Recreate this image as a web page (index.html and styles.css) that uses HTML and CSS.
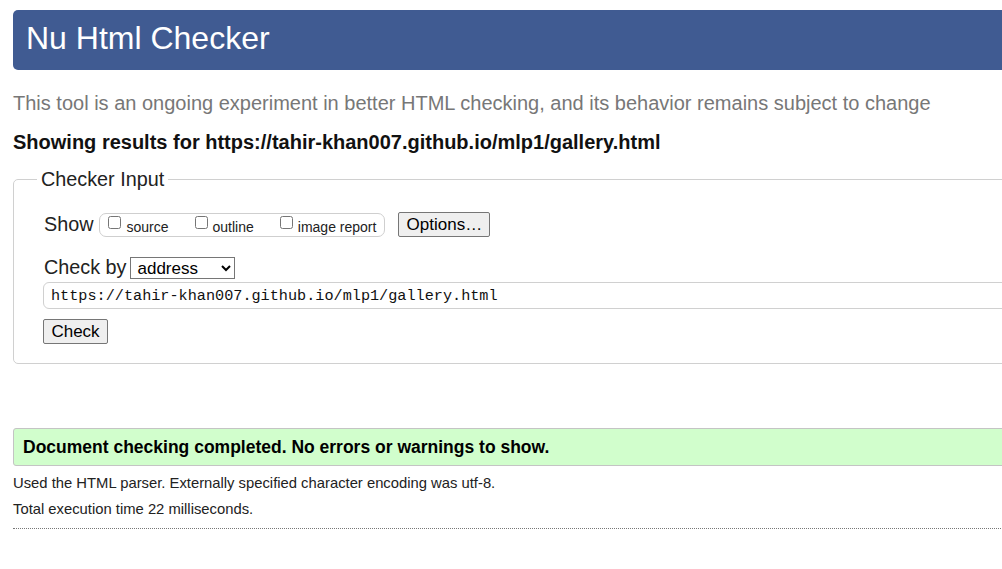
FILE: index.html
```html
<!DOCTYPE html>
<html lang="en">
<head>
<meta charset="utf-8">
<title>Showing results for https://tahir-khan007.github.io/mlp1/gallery.html - Nu Html Checker</title>
<link rel="stylesheet" href="styles.css">
</head>
<body>
<div class="page">
  <h1 class="masthead">Nu Html Checker</h1>
  <p class="tagline">This tool is an ongoing experiment in better HTML checking, and its behavior remains subject to change</p>
  <p class="results-for">Showing results for https://tahir-khan007.github.io/mlp1/gallery.html</p>
  <form class="checker-form">
    <fieldset class="checker">
      <legend class="checker-legend">Checker Input</legend>
      <div class="show-row">
        <span class="row-label">Show</span>
        <span class="show-opts">
          <label class="opt"><input type="checkbox" class="cb"><span>source</span></label>
          <label class="opt"><input type="checkbox" class="cb"><span>outline</span></label>
          <label class="opt"><input type="checkbox" class="cb"><span>image report</span></label>
        </span>
        <button type="button" class="btn options-btn">Options…</button>
      </div>
      <div class="checkby-row">
        <span class="row-label">Check by</span>
        <select class="checkby-select"><option>address</option><option>file upload</option><option>text input</option></select>
      </div>
      <input class="url-input" type="url" value="https://tahir-khan007.github.io/mlp1/gallery.html">
      <div class="submit-row"><button type="button" class="btn check-btn">Check</button></div>
    </fieldset>
  </form>
  <p class="success">Document checking completed. No errors or warnings to show.</p>
  <p class="details">Used the HTML parser. Externally specified character encoding was utf-8.</p>
  <p class="details">Total execution time 22 milliseconds.</p>
  <hr class="rule">
</div>
</body>
</html>
```
FILE: styles.css
```css
html {
  overflow: hidden;
  background: #ffffff;
}
body {
  margin: 0;
  font-family: "Liberation Sans", Arial, sans-serif;
  color: #111;
}
.page {
  width: 1200px;
  padding: 10px 0 0 13px;
}
.masthead {
  margin: 0;
  height: 60px;
  box-sizing: border-box;
  padding-left: 13px;
  line-height: 57px;
  font-size: 32px;
  font-weight: normal;
  color: #ffffff;
  background: #405b92;
  border-radius: 5px 0 0 5px;
}
.tagline {
  margin: 21px 0 0;
  font-size: 20px;
  line-height: 24px;
  color: #777;
}
.results-for {
  margin: 15px 0 0;
  font-size: 20px;
  line-height: 24px;
  font-weight: bold;
  color: #111;
}
.checker-form {
  margin: 14px 0 0;
}
.checker {
  margin: 0;
  border: 1px solid #d0d0d0;
  border-radius: 5px;
  padding: 20px 0 19px 29px;
  min-width: 0;
}
.checker-legend {
  margin-left: -6px;
  padding: 0 4px 0 4px;
  font-size: 19.8px;
  line-height: 23px;
  color: #222;
}
.show-row {
  display: flex;
  align-items: center;
  height: 27px;
  margin-left: 1px;
}
.row-label {
  font-size: 19.8px;
  color: #222;
}
.show-opts {
  display: flex;
  align-items: center;
  gap: 26px;
  height: 22px;
  margin-left: 6px;
  padding: 0 8px 0 8px;
  border: 1px solid #cfcfcf;
  border-radius: 7px;
}
.opt {
  display: flex;
  align-items: center;
  gap: 5px;
  font-size: 14px;
  color: #222;
}
.opt span {
  position: relative;
  top: 2px;
}
.cb {
  margin: 0;
  width: 13px;
  height: 13px;
  position: relative;
  top: -2px;
}
.btn {
  font-family: "Liberation Sans", Arial, sans-serif;
  font-size: 17px;
  color: #000;
  background: #efefef;
  border: 1px solid #767676;
  border-radius: 2px;
  padding: 0 7px;
  height: 25px;
}
.options-btn {
  margin-left: 13px;
  width: 92px;
}
.checkby-row {
  display: flex;
  align-items: center;
  gap: 4px;
  height: 23px;
  margin-top: 18px;
  margin-left: 1px;
}
.checkby-select {
  width: 105px;
  height: 22px;
  font-family: "Liberation Sans", Arial, sans-serif;
  font-size: 17px;
  color: #000;
  border: 1px solid #767676;
  border-radius: 0;
  background: #fff;
  padding: 0 2px;
}
.url-input {
  display: block;
  box-sizing: border-box;
  width: 1200px;
  height: 27px;
  margin: 3px 0 0;
  padding: 0 7px;
  font-family: "Liberation Mono", "DejaVu Sans Mono", monospace;
  font-size: 15.2px;
  color: #111;
  border: 1px solid #d0d0d0;
  border-radius: 6px;
  background: #fff;
}
.submit-row {
  margin-top: 10px;
  display: flex;
}
.check-btn {
  width: 65px;
}
.success {
  margin: 64px 0 0;
  box-sizing: border-box;
  height: 38px;
  line-height: 36px;
  padding-left: 9px;
  font-size: 17.5px;
  font-weight: bold;
  color: #000;
  background: #d1fecc;
  border: 1px solid #c4c4c4;
  border-radius: 3px 0 0 3px;
}
.details {
  margin: 7px 0 0;
  font-size: 14.8px;
  line-height: 20px;
  color: #222;
}
.details + .details {
  margin-top: 6px;
}
.rule {
  margin: 9px 0 0;
  border: 0;
  border-top: 1px dotted #777;
  height: 0;
}
```
